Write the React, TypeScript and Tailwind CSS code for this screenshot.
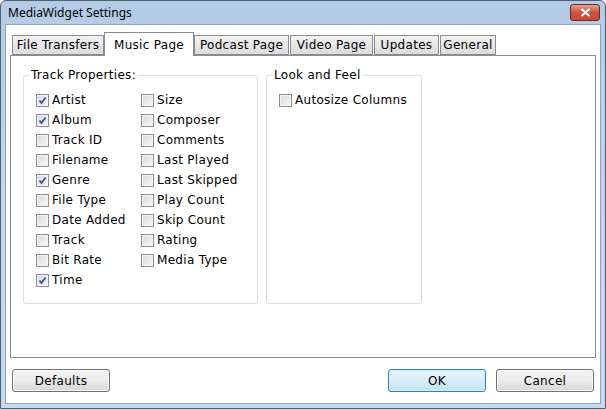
const LEFT = [
  { label: "Artist", checked: true },
  { label: "Album", checked: true },
  { label: "Track ID", checked: false },
  { label: "Filename", checked: false },
  { label: "Genre", checked: true },
  { label: "File Type", checked: false },
  { label: "Date Added", checked: false },
  { label: "Track", checked: false },
  { label: "Bit Rate", checked: false },
  { label: "Time", checked: true },
];

const RIGHT = [
  { label: "Size", checked: false },
  { label: "Composer", checked: false },
  { label: "Comments", checked: false },
  { label: "Last Played", checked: false },
  { label: "Last Skipped", checked: false },
  { label: "Play Count", checked: false },
  { label: "Skip Count", checked: false },
  { label: "Rating", checked: false },
  { label: "Media Type", checked: false },
];

// widths taken from the dialog's tab strip
const TABS = [
  { label: "File Transfers", w: "w-[92px]" },
  { label: "Music Page", w: "w-[90px]" },
  { label: "Podcast Page", w: "w-[95px]" },
  { label: "Video Page", w: "w-[83px]" },
  { label: "Updates", w: "w-[65px]" },
  { label: "General", w: "w-[56px]" },
];

function Check({ label, checked }: { label: string; checked: boolean }) {
  return (
    <div className="flex h-[20px] items-center gap-[3px] whitespace-nowrap">
      <span className="flex h-[13px] w-[13px] items-center justify-center border border-[#8e8f8f] bg-gradient-to-br from-[#d9d9d9] to-[#f7f7f7] shadow-[inset_0_0_0_1px_#f4f4f4]">
        {checked && (
          <svg width="9" height="9" viewBox="0 0 9 9">
            <path d="M1.5 4.5 L3.5 7 L7.5 1.5" fill="none" stroke="#3d55a0" strokeWidth="1.8" />
          </svg>
        )}
      </span>
      <span>{label}</span>
    </div>
  );
}

function Group({ title, className, children }: { title: string; className: string; children?: React.ReactNode }) {
  return (
    <div className={"relative rounded-[3px] border border-[#d5dfe5] " + className}>
      <span className="absolute -top-[9px] left-[5px] bg-white px-[2px] leading-[16px]">{title}</span>
      {children}
    </div>
  );
}

function Button({ label, primary }: { label: string; primary?: boolean }) {
  return (
    <button
      className={
        "h-[23px] w-[98px] rounded-[3px] border text-[12px] leading-none text-black " +
        (primary
          ? "border-[#3c7fb1] bg-gradient-to-b from-[#eaf6fd] to-[#c4e3f6] shadow-[inset_0_0_0_1px_#cbeefd]"
          : "border-[#707070] bg-gradient-to-b from-[#f2f2f2] via-[#ebebeb] to-[#d6d6d6] shadow-[inset_0_0_0_1px_#fcfcfc]")
      }
    >
      {label}
    </button>
  );
}

export default function App() {
  return (
    <div className="h-[409px] w-[606px] bg-white" style={{ fontFamily: '"DejaVu Sans", Verdana, sans-serif' }}>
      <div className="flex h-full w-full flex-col rounded-t-[6px] border border-[#555f6b] bg-gradient-to-b from-[#b3cbe6] via-[#c2d7ee] to-[#c6daef] px-[4px] pb-[4px]">
        <div className="flex h-[23px] shrink-0 items-center justify-between pl-[3px] pr-[1px]">
          <span className="text-[12px] text-black" style={{ fontFamily: '"Noto Sans", "Liberation Sans", sans-serif' }}>
            MediaWidget Settings
          </span>
          <span className="flex h-[17px] w-[30px] items-center justify-center rounded-[3px] border border-[#6b2a28] bg-gradient-to-b from-[#e3a18e] via-[#c9523d] to-[#c4493a]">
            <svg width="11" height="9" viewBox="0 0 11 9">
              <path d="M1.5 1 L9.5 8 M9.5 1 L1.5 8" stroke="#fff" strokeWidth="2.2" />
            </svg>
          </span>
        </div>

        <div className="flex flex-1 flex-col border border-[#8ba5c2] bg-white px-[4px] pt-[7px] text-[12px] tracking-[0.3px] text-black">
          <div className="flex h-[23px] items-end gap-px pl-[2px]">
            {TABS.map((t) =>
              t.label === "Music Page" ? (
                <div
                  key={t.label}
                  className={"relative z-10 -mx-[1px] -mb-px flex h-[24px] items-center justify-center border border-b-0 border-[#898c95] bg-white leading-none " + t.w}
                >
                  {t.label}
                </div>
              ) : (
                <div
                  key={t.label}
                  className={"flex h-[20px] items-center justify-center border border-[#898c95] bg-gradient-to-b from-[#f2f2f2] to-[#dcdcdc] leading-none " + t.w}
                >
                  {t.label}
                </div>
              ),
            )}
          </div>

          <div className="flex h-[303px] gap-[8px] border border-[#898c95] bg-white pl-[12px] pt-[19px]">
            <Group title="Track Properties:" className="h-[229px] w-[235px] pl-[12px] pt-[14px]">
              <div className="flex">
                <div className="w-[105px]">
                  {LEFT.map((c) => (
                    <Check key={c.label} {...c} />
                  ))}
                </div>
                <div>
                  {RIGHT.map((c) => (
                    <Check key={c.label} {...c} />
                  ))}
                </div>
              </div>
            </Group>
            <Group title="Look and Feel" className="h-[229px] w-[156px] pl-[12px] pt-[14px]">
              <Check label="Autosize Columns" checked={false} />
            </Group>
          </div>

          <div className="flex flex-1 items-center justify-between pl-[2px] pr-[2px]">
            <Button label="Defaults" />
            <div className="flex gap-[10px]">
              <Button label="OK" primary />
              <Button label="Cancel" />
            </div>
          </div>
        </div>
      </div>
    </div>
  );
}
